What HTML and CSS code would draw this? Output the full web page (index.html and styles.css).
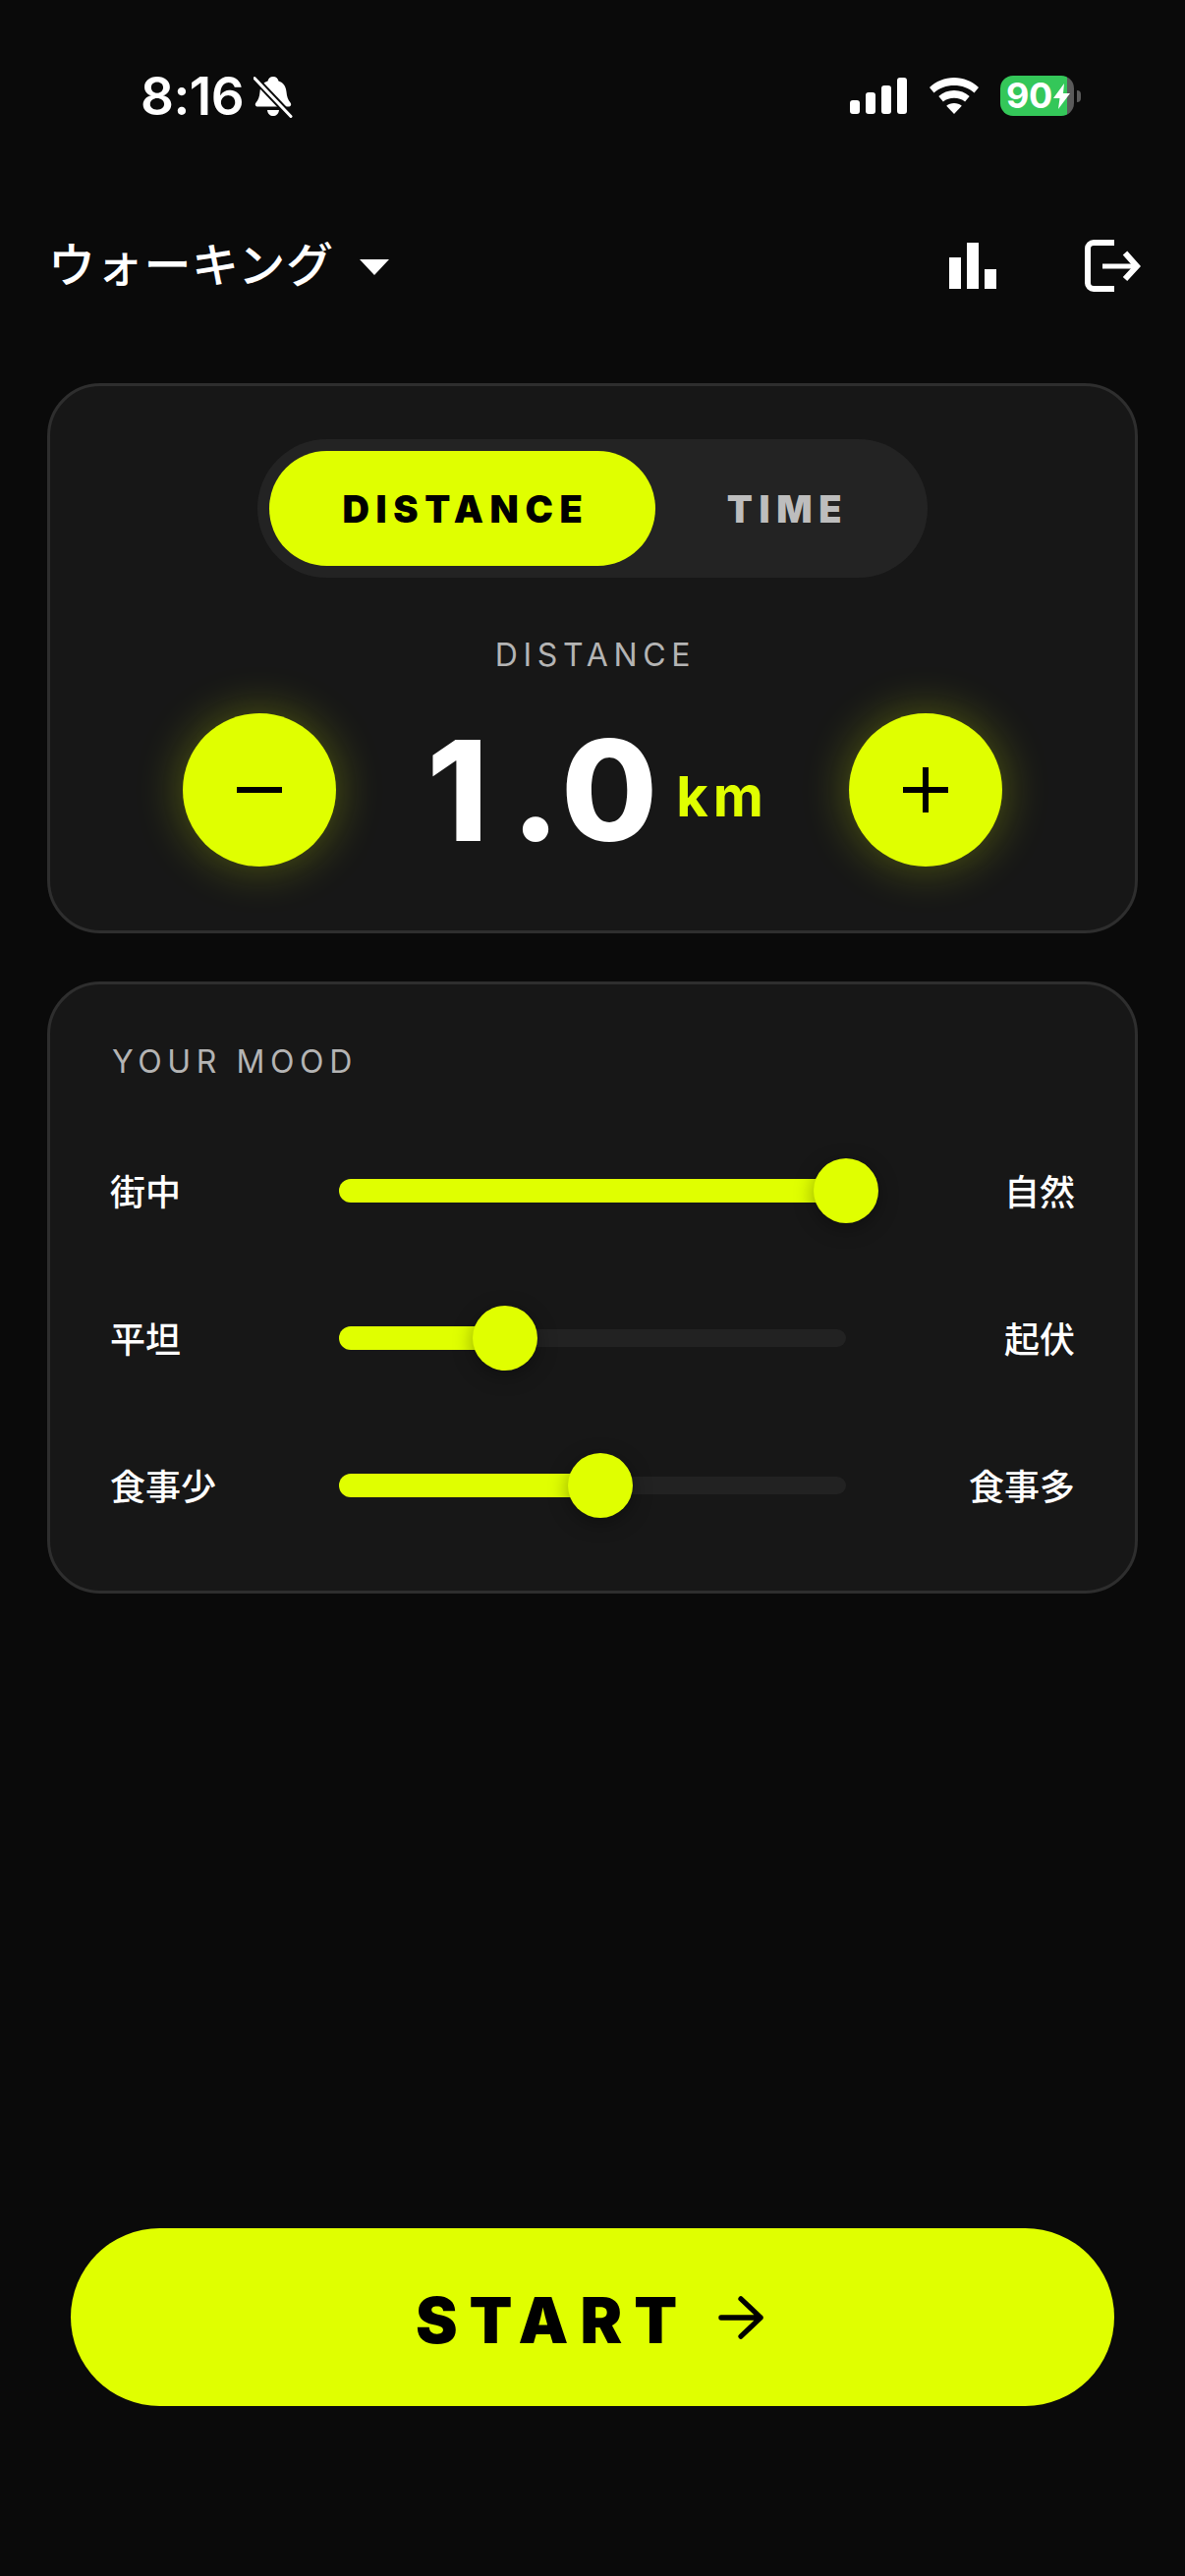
FILE: index.html
```html
<!DOCTYPE html>
<html lang="ja">
<head>
<meta charset="utf-8">
<title>Walking</title>
<link rel="stylesheet" href="styles.css">
</head>
<body>
<main class="page">
  <div class="status">
    <div class="status-left">
      <span class="clock">8:16</span>
      <svg class="bell" viewBox="0 0 40 44"><path fill="#fff" d="M20 1c3 0 5 2 5.500 4.500 5 1.500 7.500 5.500 8 11 .5 5 1.500 8 4 11 1.500 2 .5 4-2 4H4.500c-2.500 0-3.500-2-2-4 2.500-3 3.500-6 4-11 .5-5.500 3-9.500 8-11C15 3 17 1 20 1zM14 35h12c-.5 4-3 6-6 6s-5.500-2-6-6z"/><path stroke="#0a0a0a" stroke-width="7" d="M-1 .5l41 43"/><path stroke="#fff" stroke-width="3" stroke-linecap="round" d="M1 2.500l37 39"/></svg>
    </div>
    <div class="status-right">
      <div class="signal"><i class="b1"></i><i class="b2"></i><i class="b3"></i><i class="b4"></i></div>
      <svg class="wifi" viewBox="0 0 50 37"><path fill="#fff" d="M25 0c9.500 0 18.500 3.700 25 10l-4.500 5.500C40 10.500 33 8 25 8S10 10.500 4.500 15.500L0 10C6.500 3.700 15.500 0 25 0z"/><path fill="#fff" d="M25 13c6 0 11.500 2.300 15.700 6l-4.600 5.500C33 22 29.200 20.800 25 20.800S17 22 13.900 24.500L9.300 19C13.500 15.300 19 13 25 13z"/><path fill="#fff" d="M25 26c3 0 5.700 1 7.800 2.800L25 37l-7.800-8.200C19.300 27 22 26 25 26z"/></svg>
      <div class="battery">
        <div class="battery-body">
          <span class="battery-text">90</span>
          <svg class="bolt" viewBox="0 0 17 26"><path fill="#fff" d="M11 0L0 15h6.500L5 26l12-16h-7z"/></svg>
        </div>
        <i class="battery-nub"></i>
      </div>
    </div>
  </div>

  <header class="topbar">
    <div class="activity">
      <h1 class="activity-name">ウォーキング</h1>
      <i class="caret"></i>
    </div>
    <div class="top-actions">
      <svg class="stats" viewBox="0 0 48 47"><path fill="#fff" d="M0 15h12v32H0zM18 0h12v47H18zM36 27h12v20H36z"/></svg>
      <svg class="exit" viewBox="0 0 57 53"><path fill="none" stroke="#fff" stroke-width="6" d="M30 3H9a6 6 0 0 0-6 6v35a6 6 0 0 0 6 6h21"/><path fill="none" stroke="#fff" stroke-width="5" d="M18 27h36"/><path fill="none" stroke="#fff" stroke-width="6" d="M41 13.500L53 27 41 40"/></svg>
    </div>
  </header>

  <section class="card goal-card">
    <div class="segment">
      <div class="seg-item seg-active">DISTANCE</div>
      <div class="seg-item seg-idle">TIME</div>
    </div>
    <div class="goal-label">DISTANCE</div>
    <div class="stepper">
      <button class="round-btn"><svg class="pm" viewBox="0 0 50 50"><path fill="#000" d="M2 22h46v6H2z"/></svg></button>
      <div class="value"><span class="value-num"><span class="digit-one">1</span><span class="digit-dot">.</span>0</span><span class="value-unit">km</span></div>
      <button class="round-btn"><svg class="pm" viewBox="0 0 50 50"><path fill="#000" d="M2 22h46v6H2z"/><path fill="#000" d="M22 2h6v46h-6z"/></svg></button>
    </div>
  </section>

  <section class="card mood-card">
    <div class="mood-title">YOUR MOOD</div>
    <div class="mood-row">
      <span class="mood-left">街中</span>
      <div class="slider"><div class="fill" style="width:100%"></div><div class="thumb" style="left:100%"></div></div>
      <span class="mood-right">自然</span>
    </div>
    <div class="mood-row">
      <span class="mood-left">平坦</span>
      <div class="slider"><div class="fill" style="width:32.700%"></div><div class="thumb" style="left:32.700%"></div></div>
      <span class="mood-right">起伏</span>
    </div>
    <div class="mood-row">
      <span class="mood-left">食事少</span>
      <div class="slider"><div class="fill" style="width:51.500%"></div><div class="thumb" style="left:51.500%"></div></div>
      <span class="mood-right">食事多</span>
    </div>
  </section>

  <button class="start">
    <span class="start-text">START</span>
    <svg class="start-arrow" viewBox="0 0 48 46"><path fill="none" stroke="#000" stroke-width="5.500" stroke-linecap="round" stroke-linejoin="round" d="M3 23h42M24 3l21 20-21 20"/></svg>
  </button>
</main>
</body>
</html>
```
FILE: styles.css
```css
* { box-sizing: border-box; }
html, body { margin: 0; padding: 0; background: #0a0a0a; }
body { font-family: Inter, "Noto Sans CJK JP", sans-serif; color: #fff; }
.page { width: 1206px; height: 2622px; display: flex; flex-direction: column; overflow: hidden; }

.status { height: 77px; margin-top: 77px; padding: 0 106px 0 143px; display: flex; justify-content: space-between; align-items: flex-start; }
.status-left { display: flex; align-items: flex-start; gap: 10px; height: 44px; }
.clock { font-size: 53px; line-height: 42px; font-weight: 600; letter-spacing: -0.5px; }
.bell { width: 40px; height: 44px; display: block; }
.status-right { display: flex; align-items: flex-start; }
.signal { width: 58px; height: 37px; margin-top: 2px; display: flex; align-items: flex-end; justify-content: space-between; }
.signal i { display: block; width: 10px; border-radius: 3px; background: #fff; }
.b1 { height: 14px; } .b2 { height: 22px; } .b3 { height: 29px; } .b4 { height: 37px; }
.wifi { width: 50px; height: 37px; margin: 2px 0 0 23px; display: block; }
.battery { margin-left: 22px; display: flex; align-items: center; gap: 3px; }
.battery-body { width: 75px; height: 41px; border-radius: 13px; background: linear-gradient(90deg, #34c759 0 68px, #5a5a5a 68px); display: flex; align-items: center; padding-left: 6px; }
.battery-text { font-size: 36px; line-height: 41px; font-weight: 700; width: 48px; letter-spacing: -0.5px; }
.bolt { width: 17px; height: 26px; display: block; }
.battery-nub { display: block; width: 4px; height: 12px; border-radius: 0 6px 6px 0; background: #5a5a5a; }

.topbar { height: 56px; margin-top: 88px; padding: 0 45px 0 49px; display: flex; justify-content: space-between; align-items: center; }
.activity { display: flex; align-items: center; gap: 26px; }
.activity-name { margin: 0; font-size: 48px; line-height: 56px; font-weight: 500; letter-spacing: 0.7px; }
.caret { display: block; width: 0; height: 0; border-left: 15px solid transparent; border-right: 15px solid transparent; border-top: 16px solid #fff; margin-top: 3px; }
.top-actions { display: flex; align-items: center; gap: 90px; }
.stats { width: 48px; height: 47px; display: block; }
.exit { width: 57px; height: 53px; display: block; }

.card { margin: 0 48px; background: #171717; border: 3px solid #2e2e2e; border-radius: 54px; }
.goal-card { height: 560px; margin-top: 92px; padding: 54px 0 0; display: flex; flex-direction: column; align-items: center; }
.segment { width: 682px; height: 141px; padding: 12px; border-radius: 71px; background: #232323; display: flex; align-items: center; }
.seg-item { height: 117px; display: flex; align-items: center; justify-content: center; font-size: 38px; font-weight: 900; letter-spacing: 6.700px; }
.seg-active { width: 393px; border-radius: 59px; background: #e0ff00; color: #000; padding-left: 7px; }
.seg-idle { flex: 1; color: #bdbdbd; padding-left: 4px; }
.goal-label { margin-top: 59px; padding-left: 6px; font-size: 32px; line-height: 40px; letter-spacing: 5.700px; color: #b4b4b4; }
.stepper { margin-top: 39px; width: 834px; display: flex; align-items: center; justify-content: space-between; }
.round-btn { width: 156px; height: 156px; padding: 0; border: 0; border-radius: 50%; background: #e0ff00; box-shadow: 0 0 48px rgba(224, 255, 0, 0.3); display: flex; align-items: center; justify-content: center; }
.pm { width: 50px; height: 50px; display: block; }
.value { display: flex; align-items: center; gap: 6px; margin-left: 10px; }
.value-num { font-size: 142px; line-height: 156px; font-weight: 800; font-kerning: none; letter-spacing: 13px; }
.digit-one { letter-spacing: 23px; }
.digit-dot { letter-spacing: 1px; }
.value-unit { font-size: 56px; line-height: 60px; margin-top: 14px; font-weight: 700; color: #e0ff00; letter-spacing: 5px; }

.mood-card { height: 623px; margin-top: 49px; padding: 59px 61px 0; }
.mood-title { font-size: 32px; line-height: 40px; letter-spacing: 5.600px; color: #b4b4b4; margin: 0 0 36px 2px; }
.mood-row { height: 150px; display: flex; align-items: center; }
.mood-left { width: 233px; padding-bottom: 2px; font-size: 36px; font-weight: 500; }
.mood-right { flex: 1; padding-bottom: 2px; text-align: right; font-size: 36px; font-weight: 500; }
.slider { position: relative; width: 516px; height: 18px; border-radius: 9px; background: #222; }
.fill { position: absolute; left: 0; top: -3px; height: 24px; border-radius: 12px; background: #e0ff00; }
.thumb { position: absolute; top: 9px; width: 66px; height: 66px; margin: -33px 0 0 -33px; border-radius: 50%; background: #e0ff00; box-shadow: 0 5px 20px rgba(0, 0, 0, 0.35); }

.start { margin: auto 72px 173px; height: 181px; border: 0; border-radius: 91px; background: #e0ff00; display: flex; align-items: center; justify-content: center; gap: 30px; padding: 0 6px 0 0; font-family: inherit; }
.start-text { font-size: 64px; font-weight: 900; letter-spacing: 12px; color: #000; padding-top: 6px; }
.start-arrow { width: 46px; height: 44px; display: block; }
```
